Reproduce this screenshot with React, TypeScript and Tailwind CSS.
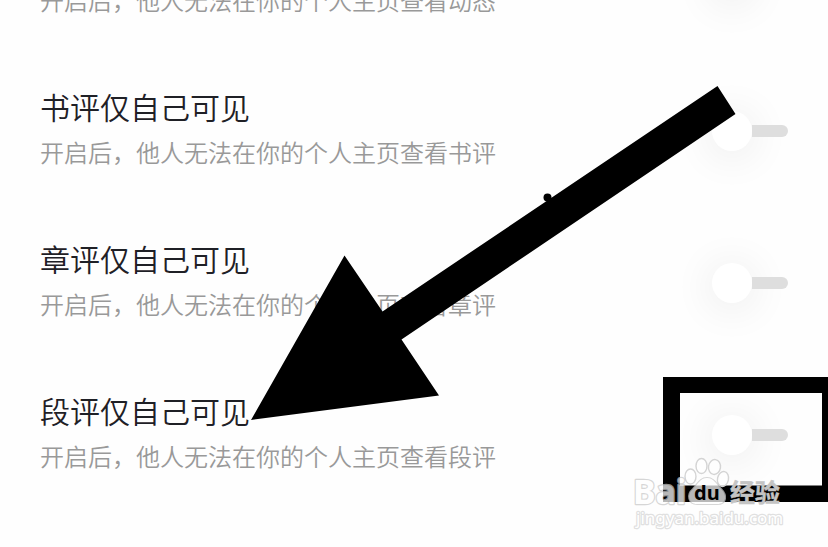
type Setting = { id: string; title: string; hint: string };

const settings: Setting[] = [
  { id: "moments", title: "动态仅自己可见", hint: "开启后，他人无法在你的个人主页查看动态" },
  { id: "books", title: "书评仅自己可见", hint: "开启后，他人无法在你的个人主页查看书评" },
  { id: "chapters", title: "章评仅自己可见", hint: "开启后，他人无法在你的个人主页查看章评" },
  { id: "paragraphs", title: "段评仅自己可见", hint: "开启后，他人无法在你的个人主页查看段评" },
];

function SettingRow({ id, title, hint }: Setting) {
  return (
    <li className="flex h-[152px] items-center justify-between px-10">
      <label htmlFor={id} className="flex flex-col pb-1 font-[350]">
        <span className="text-[30px] leading-[45px] text-[#1f2026]">{title}</span>
        <span className="text-2xl leading-[45px] text-[#999999]">{hint}</span>
      </label>
      <input
        id={id}
        type="checkbox"
        role="switch"
        className="flex h-10 w-[76px] shrink-0 appearance-none items-center before:size-10 before:rounded-full before:bg-white before:shadow-[0_4px_40px_4px_rgba(0,0,0,0.07)] after:h-3 after:grow after:rounded-r-full after:bg-[#dedede] checked:flex-row-reverse"
      />
    </li>
  );
}

function Watermark() {
  return (
    <svg
      className="absolute left-[630px] top-[454px] h-[80px] w-[160px]"
      viewBox="630 454 160 80"
      aria-label="Baidu 经验"
    >
      <g fill="#ffffff" stroke="#d4d4d4" strokeWidth="1.4">
        <g fillOpacity="0.7">
          <ellipse cx="690.500" cy="476.500" rx="5.500" ry="7.500" />
          <ellipse cx="701.500" cy="466" rx="5.500" ry="7.500" />
          <ellipse cx="714.500" cy="467" rx="6" ry="7.500" transform="rotate(8 714.500 467)" />
          <ellipse cx="723" cy="479" rx="5.500" ry="7.500" transform="rotate(12 723 479)" />
        </g>
        <g opacity="0.72" stroke="#c8c8c8" strokeLinejoin="round" fontWeight="bold" paintOrder="stroke">
          <text x="633" y="504" fontSize="34" strokeWidth="2.4" fontFamily="'Noto Sans', sans-serif">Bai</text>
          <path strokeWidth="2" d="M707 478C700 478 698 484 693 489C686 495 689 504 697 504H717C727 504 727 495 721 489C716 484 714 478 707 478Z" />
        </g>
        <g fill="#c4c4c4" stroke="#c4c4c4" strokeWidth="0.5" fontWeight="bold">
          <text x="730" y="502" fontSize="25" fontFamily="'Noto Sans CJK SC', sans-serif">经验</text>
        </g>
      </g>
      <text x="694" y="500" fontSize="20" fontWeight="bold" fontFamily="'Noto Sans', sans-serif">du</text>
      <text
        x="636"
        y="524"
        fontSize="17"
        fontFamily="'Noto Sans', sans-serif"
        fill="#ffffff"
        stroke="#e0e0e0"
        strokeWidth="2.4"
        strokeLinejoin="round"
        paintOrder="stroke"
      >
        jingyan.baidu.com
      </text>
    </svg>
  );
}

export default function App() {
  return (
    <main
      lang="zh-CN"
      className="relative h-screen overflow-hidden bg-[#fefefe] font-['Noto_Sans_CJK_SC',sans-serif]"
    >
      <ul className="-mt-[97px]">
        {settings.map((s) => (
          <SettingRow key={s.id} {...s} />
        ))}
      </ul>
      <svg
        className="pointer-events-none absolute left-0 top-0 h-[547px] w-[828px]"
        viewBox="0 0 828 547"
        aria-hidden="true"
      >
        <path d="M251 420L344.500 255.500L382.500 311.500L717.500 86L735.500 114L401.500 339.500L439 395.500Z" />
        <circle cx="547.500" cy="197.500" r="4" />
        <path fillRule="evenodd" d="M663 377H830V502H663ZM680 393V485.500H822V393Z" />
      </svg>
      <Watermark />
    </main>
  );
}
